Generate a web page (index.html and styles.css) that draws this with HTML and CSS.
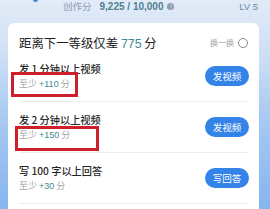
FILE: index.html
```html
<!DOCTYPE html>
<html lang="zh">
<head>
<meta charset="utf-8">
<link rel="stylesheet" href="styles.css">
</head>
<body>
<div class="page">
  <div class="header">
    <span class="avatar-edge"></span>
    <span class="score"><span class="score-label">创作分</span><span class="score-num">9,225 / 10,000</span><span class="info">?</span></span>
    <span class="level">LV 5</span>
  </div>
  <div class="card">
    <div class="card-head">
      <div class="head-title">距离下一等级仅差 <span class="teal">775</span> 分</div>
      <div class="swap">换一换 <span class="swap-icon"></span></div>
    </div>
    <div class="task">
      <div class="task-text">
        <div class="task-title">发 1 分钟以上视频</div>
        <div class="task-sub">至少 <span class="teal">+110</span> 分<span class="mark mark-1"></span></div>
      </div>
      <div class="btn">发视频</div>
    </div>
    <div class="task">
      <div class="task-text">
        <div class="task-title">发 2 分钟以上视频</div>
        <div class="task-sub">至少 <span class="teal">+150</span> 分<span class="mark mark-2"></span></div>
      </div>
      <div class="btn">发视频</div>
    </div>
    <div class="task">
      <div class="task-text">
        <div class="task-title">写 100 字以上回答</div>
        <div class="task-sub">至少 <span class="teal">+30</span> 分</div>
      </div>
      <div class="btn">写回答</div>
    </div>
  </div>
</div>
</body>
</html>
```
FILE: styles.css
```css
html, body {
  margin: 0;
  padding: 0;
}
body {
  width: 270px;
  height: 209px;
  overflow: hidden;
  font-family: "Noto Sans CJK SC", "Noto Sans", sans-serif;
  background: linear-gradient(180deg, #e2ebf7 0%, #cfe0f5 25%, #a9caf2 55%, #86b5f0 100%);
}
.page {
  display: flex;
  flex-direction: column;
}
.header {
  position: relative;
  height: 23px;
  box-sizing: border-box;
  padding-top: 1px;
  display: flex;
  align-items: flex-start;
  font-size: 9.5px;
  line-height: 11px;
}
.avatar-edge {
  position: absolute;
  left: 33px;
  top: -3px;
  width: 5px;
  height: 5px;
  border-radius: 50%;
  background: #4a7fd6;
}
.score {
  margin-left: 63px;
  display: flex;
  align-items: center;
  gap: 8px;
  white-space: pre;
}
.score-label {
  color: #8d9cb2;
}
.score-num {
  color: #4f7f93;
  font-size: 10px;
  font-weight: bold;
  font-family: "Liberation Sans", sans-serif;
}
.info {
  display: inline-block;
  width: 7px;
  height: 7px;
  border-radius: 50%;
  background: #8e9aab;
  color: #dfe8f5;
  font-size: 6px;
  line-height: 7px;
  text-align: center;
  margin-left: -4px;
}
.level {
  margin-left: auto;
  margin-right: 12px;
  color: #6d88aa;
  font-family: "Liberation Sans", sans-serif;
}
.card {
  margin-left: 8px;
  width: 251px;
  background: #fff;
  border-radius: 6px 6px 0 0;
  padding: 0 10px 0 11px;
  box-sizing: border-box;
  height: 186px;
}
.card-head {
  height: 28px;
  padding-top: 14px;
  box-sizing: border-box;
  display: flex;
  justify-content: space-between;
  align-items: flex-start;
}
.head-title {
  font-size: 12.4px;
  line-height: 12px;
  color: #222;
}
.teal {
  color: #3f8a95;
  font-family: "Liberation Sans", sans-serif;
}
.swap {
  display: flex;
  align-items: center;
  gap: 4px;
  font-size: 8px;
  line-height: 12px;
  color: #a3a3a3;
  margin-right: 1px;
}
.swap-icon {
  width: 8px;
  height: 8px;
  border: 1px solid #8a8a8a;
  border-radius: 50%;
}
.task {
  height: 51px;
  box-sizing: border-box;
  padding: 12px 0;
  border-bottom: 1px solid #eeeeee;
  display: flex;
  align-items: center;
  justify-content: space-between;
}
.task-text {
  display: flex;
  flex-direction: column;
  gap: 3px;
}
.task-title {
  font-size: 10.2px;
  line-height: 12px;
  font-weight: 500;
  color: #262626;
}
.task-sub {
  position: relative;
  font-size: 9px;
  line-height: 12px;
  color: #a5a5a5;
}
.mark {
  position: absolute;
  border: 3px solid #cf1f2b;
  box-sizing: border-box;
}
.mark-1 {
  left: -8px;
  top: -6px;
  width: 67px;
  height: 25px;
}
.mark-2 {
  left: -4px;
  top: -3px;
  width: 84px;
  height: 25px;
}
.btn {
  width: 44px;
  height: 20px;
  border-radius: 10px;
  background: #3483e9;
  color: #fff;
  font-size: 9.5px;
  line-height: 20px;
  text-align: center;
}
```
